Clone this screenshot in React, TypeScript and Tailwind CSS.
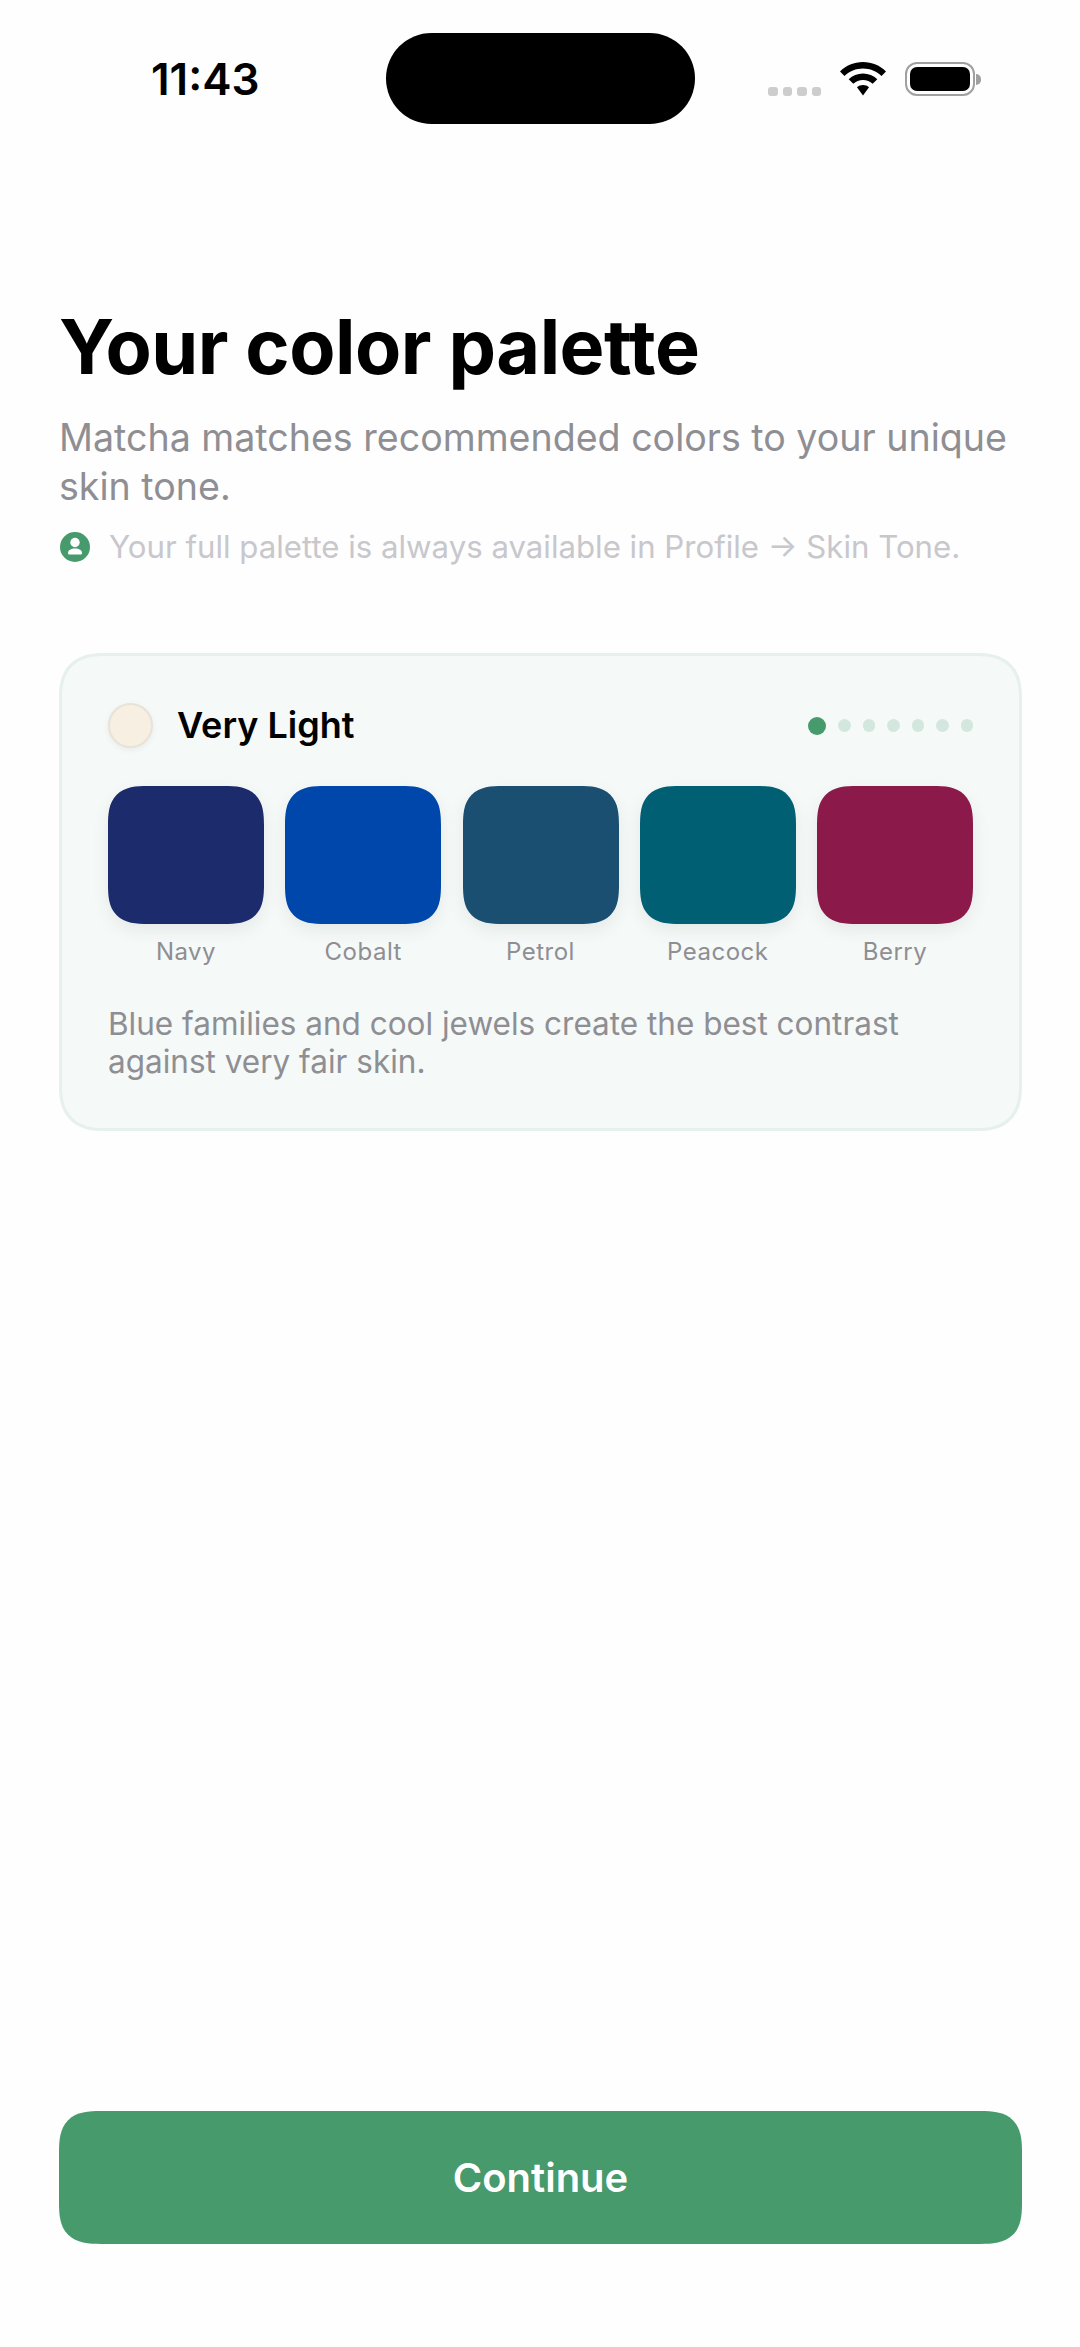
import React from 'react';

const swatches = [
    { name: 'Navy', color: 'bg-[#1c2b6b]' },
    { name: 'Cobalt', color: 'bg-[#0047ab]' },
    { name: 'Petrol', color: 'bg-[#1b4f72]' },
    { name: 'Peacock', color: 'bg-[#005f73]' },
    { name: 'Berry', color: 'bg-[#8b1a4a]' },
];

const StatusBar: React.FC = () => (
    <div className="relative h-[124px] shrink-0">
        <div className="absolute left-[386px] top-[33px] w-[309px] h-[91px] rounded-full bg-black"></div>
        <div className="flex items-start pt-[56px] pl-[151px] pr-[99px] justify-between">
            <span className="text-[44px] leading-[46px] font-semibold text-black">11:43</span>
            <div className="flex items-center mt-[6px]">
                <div className="flex gap-[5px] mt-[25px] mr-[18px]">
                    <span className="w-[9.500px] h-[9px] rounded-[3px] bg-[#cdcdcd]"></span>
                    <span className="w-[9.500px] h-[9px] rounded-[3px] bg-[#cdcdcd]"></span>
                    <span className="w-[9.500px] h-[9px] rounded-[3px] bg-[#cdcdcd]"></span>
                    <span className="w-[9.500px] h-[9px] rounded-[3px] bg-[#cdcdcd]"></span>
                </div>
                <svg width="48" height="34" viewBox="0 0 48 34" className="mr-[18px]">
                    <path d="M24 0C15 0 7 3.500 1 9.500L5.500 14C10.500 9.200 17 6.500 24 6.500S37.500 9.200 42.500 14L47 9.500C41 3.500 33 0 24 0Z" fill="#000" />
                    <path d="M24 11.500C18.500 11.500 13.500 13.700 9.700 17.300L14.300 21.800C16.900 19.500 20.300 18 24 18S31.100 19.500 33.700 21.800L38.300 17.300C34.500 13.700 29.500 11.500 24 11.500Z" fill="#000" />
                    <path d="M24 23C21.700 23 19.600 23.800 18 25.300L24 33.500L30 25.300C28.400 23.800 26.300 23 24 23Z" fill="#000" />
                </svg>
                <div className="flex items-center">
                    <div className="w-[70px] h-[34px] rounded-[12px] border-[2.500px] border-[#a0a0a0] p-[3px]">
                        <div className="w-full h-full rounded-[7px] bg-black"></div>
                    </div>
                    <div className="w-[5px] h-[11px] ml-[1px] rounded-r-full bg-[#a0a0a0]"></div>
                </div>
            </div>
        </div>
    </div>
);

export default function App() {
    return (
        <div className="w-[1080px] h-[2347px] bg-[#fefefe] flex flex-col font-['Inter',sans-serif]">
            <StatusBar />

            <div className="flex-1 flex flex-col pl-[59px] pr-[58px]">
                <h1 className="mt-[181px] text-[75.500px] leading-[84px] font-bold tracking-[-0.5px] text-black">Your color palette</h1>
                <p className="mt-[24px] text-[37.600px] leading-[49px] text-[#8e8e93]">
                    Matcha matches recommended colors to your unique skin tone.
                </p>
                <div className="mt-[16px] flex items-center gap-[19px] pl-[1px]">
                    <svg width="30" height="30" viewBox="0 0 30 30" className="shrink-0">
                        <circle cx="15" cy="15" r="15" fill="#479a6b" />
                        <circle cx="15" cy="10.500" r="4.700" fill="#fff" />
                        <path d="M8 21C8 18 11 16.500 15 16.500S22 18 22 21C22 22 21.300 22.500 20.500 22.500H9.500C8.700 22.500 8 22 8 21Z" fill="#fff" />
                    </svg>
                    <span className="text-[31.200px] leading-[40px] text-[#c7c7cc]">Your full palette is always available in Profile → Skin Tone.</span>
                </div>

                <div className="mt-[86px] h-[478px] rounded-[45px] border-[3px] border-[#e6f0ec] bg-[#f5f9f8] pt-[47px] px-[46px] [corner-shape:superellipse(1.3)]">
                    <div className="flex items-center justify-between h-[45px]">
                        <div className="flex items-center gap-[24px]">
                            <span className="w-[45px] h-[45px] rounded-full bg-[#f8efe3] border-[2px] border-[#e8e2d9] shadow-[0_2px_6px_rgba(0,0,0,0.06)]"></span>
                            <span className="text-[36px] leading-[45px] font-semibold text-black">Very Light</span>
                        </div>
                        <div className="flex items-center gap-[12px]">
                            <span className="w-[18px] h-[18px] rounded-full bg-[#479a6b]"></span>
                            {[0, 1, 2, 3, 4, 5].map((i) => (
                                <span key={i} className="w-[12.500px] h-[12.500px] rounded-full bg-[#d3e7de]"></span>
                            ))}
                        </div>
                    </div>

                    <div className="mt-[38px] flex justify-between">
                        {swatches.map((s) => (
                            <div key={s.name} className="w-[156px] flex flex-col items-center">
                                <div className={`w-[156px] h-[138px] rounded-[40px] [corner-shape:superellipse(1.5)] shadow-[0_6px_18px_rgba(0,0,0,0.07)] ${s.color}`}></div>
                                <span className="mt-[13px] text-[24px] leading-[30px] tracking-[0.5px] text-[#8e8e93]">{s.name}</span>
                            </div>
                        ))}
                    </div>

                    <p className="mt-[38px] text-[31.500px] leading-[38px] text-[#8e8e93]">
                        Blue families and cool jewels create the best contrast against very fair skin.
                    </p>
                </div>

                <button className="mt-auto mb-[103px] h-[133px] rounded-[42px] [corner-shape:superellipse(1.5)] bg-[#479a6b] text-white text-[40px] leading-[60px] font-semibold">
                    Continue
                </button>
            </div>
        </div>
    );
}
